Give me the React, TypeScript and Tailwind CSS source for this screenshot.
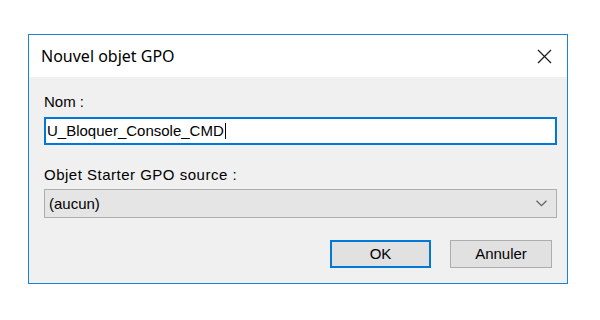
const sans = "font-['Liberation_Sans',Arial,sans-serif]";

function CloseIcon() {
  return (
    <svg width="15" height="15" viewBox="0 0 15 15" aria-hidden="true">
      <path d="M1 1 L14 14 M14 1 L1 14" stroke="#1a1a1a" strokeWidth="1.2" fill="none" />
    </svg>
  );
}

function Chevron() {
  return (
    <svg width="11" height="7" viewBox="0 0 11 7" aria-hidden="true">
      <path d="M0.5 0.8 L5.5 5.6 L10.5 0.8" stroke="#606060" strokeWidth="1.2" fill="none" />
    </svg>
  );
}

export default function App() {
  return (
    <div className="h-[320px] w-[600px] bg-white pl-[28px] pt-[34px]">
      <div className="flex w-[540px] flex-col border border-[#1883d7] bg-[#f0f0f0]">
        <div className="flex h-[42px] items-center justify-between bg-white pl-[12px] pr-[15px]">
          <span className="font-['Noto_Sans','Open_Sans',sans-serif] text-[16px] text-black">
            Nouvel objet GPO
          </span>
          <CloseIcon />
        </div>

        <div className={`flex flex-col pb-[15px] pl-[15px] pr-[10px] pt-[16px] ${sans}`}>
          <label className="text-[15px] leading-[18px] text-black">Nom :</label>
          <div className="mt-[6px] flex h-[28px] items-center border-2 border-[#0078d7] bg-white pl-[1px]">
            <span className="text-[15px] leading-[18px] text-black">U_Bloquer_Console_CMD</span>
            <span className="ml-[1px] h-[16px] w-px bg-black" />
          </div>

          <label className="mt-[21px] text-[15px] leading-[18px] tracking-[0.5px] text-black">
            Objet Starter GPO source :
          </label>
          <div className="mt-[5px] flex h-[29px] items-center justify-between border border-[#adadad] bg-[#e5e5e5] pl-[4px] pr-[9px]">
            <span className="text-[15px] leading-[18px] text-black">(aucun)</span>
            <Chevron />
          </div>

          <div className="mt-[22px] flex justify-end gap-[19px] pr-[5px]">
            <button className="flex h-[28px] w-[101px] items-center justify-center border-2 border-[#0078d7] bg-[#e1e1e1] text-[15px] text-black">
              OK
            </button>
            <button className="flex h-[28px] w-[102px] items-center justify-center border border-[#adadad] bg-[#e1e1e1] text-[15px] text-black">
              Annuler
            </button>
          </div>
        </div>
      </div>
    </div>
  );
}
